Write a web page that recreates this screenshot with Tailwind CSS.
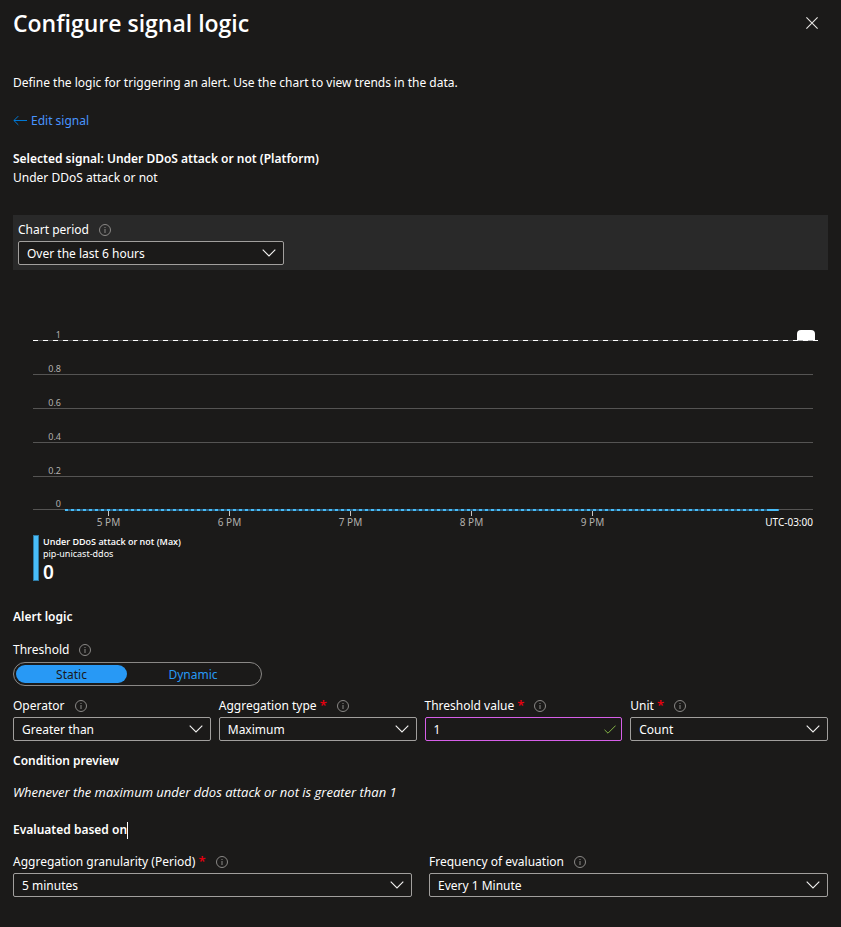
<!DOCTYPE html>
<html lang="en">
<head>
<meta charset="utf-8">
<meta name="viewport" content="width=device-width, initial-scale=1">
<title>Configure signal logic</title>
<script src="https://cdn.jsdelivr.net/npm/@tailwindcss/browser@4"></script>
</head>
<body class="min-h-screen bg-[#1b1a19] font-['Noto_Sans','Open_Sans',sans-serif] text-[12px] leading-[18px] text-white">
<svg class="hidden" aria-hidden="true">
  <symbol id="info" viewBox="0 0 12 12"><circle cx="6" cy="6" r="5.5" fill="none" stroke="#8a8886"/><path d="M5.5 5h1v4h-1zM5.5 3h1v1h-1z" fill="#8a8886"/></symbol>
  <symbol id="chevron" viewBox="0 0 14 8"><path d="M.7.7 7 7 13.3.7" fill="none" stroke="#f3f2f1" stroke-width="1.1"/></symbol>
</svg>
<main class="px-[13px] pb-[30px]">
  <header class="flex items-center justify-between pt-[7px]">
    <h1 class="font-['Open_Sans','Noto_Sans',sans-serif] text-[23px] leading-8 font-semibold">Configure signal logic</h1>
    <button type="button" aria-label="Close" class="mr-[10px]"><svg class="size-3" viewBox="0 0 12 12"><path d="M.4.4l11.2 11.2M11.6.4.4 11.6" stroke="#e8e6e4" stroke-width="1.1"/></svg></button>
  </header>

  <p class="mt-[35px]">Define the logic for triggering an alert. Use the chart to view trends in the data.</p>
  <a href="#" class="mt-5 flex w-fit items-center gap-1 text-[#4894fe]"><svg class="h-[10px] w-[14px]" viewBox="0 0 14 10"><path d="M14 4.5H1M5.3.1.9 4.5l4.4 4.4" fill="none" stroke="#0078d4"/></svg>Edit signal</a>
  <p class="mt-5 font-semibold">Selected signal: Under DDoS attack or not (Platform)</p>
  <p class="mt-px">Under DDoS attack or not</p>

  <section class="mt-7 bg-[#292929] px-[5px] pt-[6px] pb-[5px]">
    <label for="period" class="flex items-center gap-[10px]">Chart period <svg class="size-3"><use href="#info"/></svg></label>
    <div class="relative mt-[2px] w-[266px]">
      <select id="period" class="block h-6 w-full appearance-none rounded-xs border border-[#a19f9d] bg-[#1b1a19] px-2 pt-[2px]"><option>Over the last 6 hours</option></select>
      <svg class="pointer-events-none absolute top-2 right-2 h-2 w-[14px]"><use href="#chevron"/></svg>
    </div>
  </section>

  <section aria-label="Signal chart" class="mt-[37px] pr-[15px] pl-5">
    <div class="relative text-[9px] leading-[10px] text-[#b3b0ad]">
      <div class="flex h-[34px] items-end border-b border-[#555453]"><span class="w-7 text-right">1</span></div>
      <div class="flex h-[34px] items-end border-b border-[#555453]"><span class="w-7 text-right">0.8</span></div>
      <div class="flex h-[34px] items-end border-b border-[#555453]"><span class="w-7 text-right">0.6</span></div>
      <div class="flex h-[34px] items-end border-b border-[#555453]"><span class="w-7 text-right">0.4</span></div>
      <div class="flex h-[34px] items-end border-b border-[#555453]"><span class="w-7 text-right">0.2</span></div>
      <div class="flex h-[33px] items-end border-b border-[#555453]"><span class="w-7 text-right">0</span></div>
      <svg class="absolute inset-0 h-full w-full overflow-visible" aria-hidden="true">
        <svg x="100%" overflow="visible"><path d="M-16 34V27q0-4 4-4H-2q4 0 4 4v7z" fill="#fff"/><path d="M-20 33.5H5" stroke="#fff"/><path d="M-15 33.5h5M-5 33.5h5" stroke="#aaa"/></svg>
        <line x1="0" x2="97.9%" y1="33.5" y2="33.5" stroke="#fff" stroke-dasharray="5 5"/>
        <line x1="4.1%" x2="95.6%" y1="203" y2="203" stroke="#2b6183" stroke-width="2"/>
        <line x1="4.1%" x2="94.3%" y1="203" y2="203" stroke="#48bcf8" stroke-width="2" stroke-dasharray="3 3"/>
        <line x1="94.2%" x2="95.6%" y1="203" y2="203" stroke="#48bcf8" stroke-width="2"/>
      </svg>
    </div>
    <div class="grid grid-cols-[15fr_repeat(5,121fr)_160fr] text-center text-[10px] leading-3 text-[#b3b0ad]">
      <span></span>
      <span class="flex flex-col items-center"><i class="mt-px h-[5px] w-px bg-[#c8c6c4]"></i>5 PM</span>
      <span class="flex flex-col items-center"><i class="mt-px h-[5px] w-px bg-[#c8c6c4]"></i>6 PM</span>
      <span class="flex flex-col items-center"><i class="mt-px h-[5px] w-px bg-[#c8c6c4]"></i>7 PM</span>
      <span class="flex flex-col items-center"><i class="mt-px h-[5px] w-px bg-[#c8c6c4]"></i>8 PM</span>
      <span class="flex flex-col items-center"><i class="mt-px h-[5px] w-px bg-[#c8c6c4]"></i>9 PM</span>
      <span class="pt-[6px] text-right text-white">UTC-03:00</span>
    </div>
    <div class="mt-[7px] flex gap-1">
      <div class="h-[46px] w-[6px] border border-[#2f7ba5] bg-[#48bcf8]"></div>
      <div class="pt-px">
        <p class="font-['Open_Sans','Noto_Sans',sans-serif] text-[9px] leading-3 font-semibold">Under DDoS attack or not (Max)</p>
        <p class="text-[9px] leading-3">pip-unicast-ddos</p>
        <p class="text-[19px] leading-6 font-semibold">0</p>
      </div>
    </div>
  </section>

  <section class="mt-6">
    <h2 class="font-semibold">Alert logic</h2>
    <fieldset class="mt-[15px]">
      <legend class="flex items-center gap-[10px]">Threshold <svg class="size-3"><use href="#info"/></svg></legend>
      <div class="mt-[3px] flex h-6 w-[249px] rounded-full border border-[#8a8886] p-[2px] text-center leading-5">
        <label class="w-[111px] rounded-full bg-[#2899f5] text-[#1b1a19]"><input type="radio" name="threshold" checked class="sr-only">Static</label>
        <label class="flex-1 text-[#2899f5]"><input type="radio" name="threshold" class="sr-only">Dynamic</label>
      </div>
    </fieldset>

    <div class="mt-[11px] grid grid-cols-4 gap-2">
      <div>
        <label for="operator" class="flex items-center gap-[10px]">Operator <svg class="size-3"><use href="#info"/></svg></label>
        <div class="relative mt-[2px]"><select id="operator" class="block h-6 w-full appearance-none rounded-xs border border-[#a19f9d] bg-[#1b1a19] px-2 pt-[2px]"><option>Greater than</option></select><svg class="pointer-events-none absolute top-2 right-2 h-2 w-[14px]"><use href="#chevron"/></svg></div>
      </div>
      <div>
        <label for="aggregation" class="flex items-center gap-[10px]"><span>Aggregation type <span class="text-[13px] leading-none font-semibold text-[#e3000f]">*</span></span><svg class="size-3"><use href="#info"/></svg></label>
        <div class="relative mt-[2px]"><select id="aggregation" class="block h-6 w-full appearance-none rounded-xs border border-[#a19f9d] bg-[#1b1a19] px-2 pt-[2px]"><option>Maximum</option></select><svg class="pointer-events-none absolute top-2 right-2 h-2 w-[14px]"><use href="#chevron"/></svg></div>
      </div>
      <div>
        <label for="value" class="flex items-center gap-[10px]"><span>Threshold value <span class="text-[13px] leading-none font-semibold text-[#e3000f]">*</span></span><svg class="size-3"><use href="#info"/></svg></label>
        <div class="relative mt-[2px]"><input id="value" type="text" value="1" class="block h-6 w-full rounded-xs border border-[#d65fe8] bg-[#1b1a19] px-2"><svg class="pointer-events-none absolute top-2 right-[6px] h-[9px] w-3" viewBox="0 0 12 9"><path d="M.5 4.8 4 8.2 11.6.6" fill="none" stroke="#84b547"/></svg></div>
      </div>
      <div>
        <label for="unit" class="flex items-center gap-[10px]"><span>Unit <span class="text-[13px] leading-none font-semibold text-[#e3000f]">*</span></span><svg class="size-3"><use href="#info"/></svg></label>
        <div class="relative mt-[2px]"><select id="unit" class="block h-6 w-full appearance-none rounded-xs border border-[#a19f9d] bg-[#1b1a19] px-2 pt-[2px]"><option>Count</option></select><svg class="pointer-events-none absolute top-2 right-2 h-2 w-[14px]"><use href="#chevron"/></svg></div>
      </div>
    </div>

    <h2 class="mt-[11px] font-semibold">Condition preview</h2>
    <p class="mt-[13px] font-['Open_Sans','Noto_Sans',sans-serif] text-[13px] leading-[18px] italic">Whenever the maximum under ddos attack or not is greater than 1</p>
    <h2 class="mt-5 flex items-center font-semibold">Evaluated based on<i class="h-[17px] w-px bg-white"></i></h2>

    <div class="mt-[14px] grid grid-cols-2 gap-[17px]">
      <div>
        <label for="granularity" class="flex items-center gap-[10px]"><span>Aggregation granularity (Period) <span class="text-[13px] leading-none font-semibold text-[#e3000f]">*</span></span><svg class="size-3"><use href="#info"/></svg></label>
        <div class="relative mt-[2px]"><select id="granularity" class="block h-6 w-full appearance-none rounded-xs border border-[#a19f9d] bg-[#1b1a19] px-2 pt-[2px]"><option>5 minutes</option></select><svg class="pointer-events-none absolute top-2 right-2 h-2 w-[14px]"><use href="#chevron"/></svg></div>
      </div>
      <div>
        <label for="frequency" class="flex items-center gap-[10px]">Frequency of evaluation <svg class="size-3"><use href="#info"/></svg></label>
        <div class="relative mt-[2px]"><select id="frequency" class="block h-6 w-full appearance-none rounded-xs border border-[#a19f9d] bg-[#1b1a19] px-2 pt-[2px]"><option>Every 1 Minute</option></select><svg class="pointer-events-none absolute top-2 right-2 h-2 w-[14px]"><use href="#chevron"/></svg></div>
      </div>
    </div>
  </section>
</main>
</body>
</html>
